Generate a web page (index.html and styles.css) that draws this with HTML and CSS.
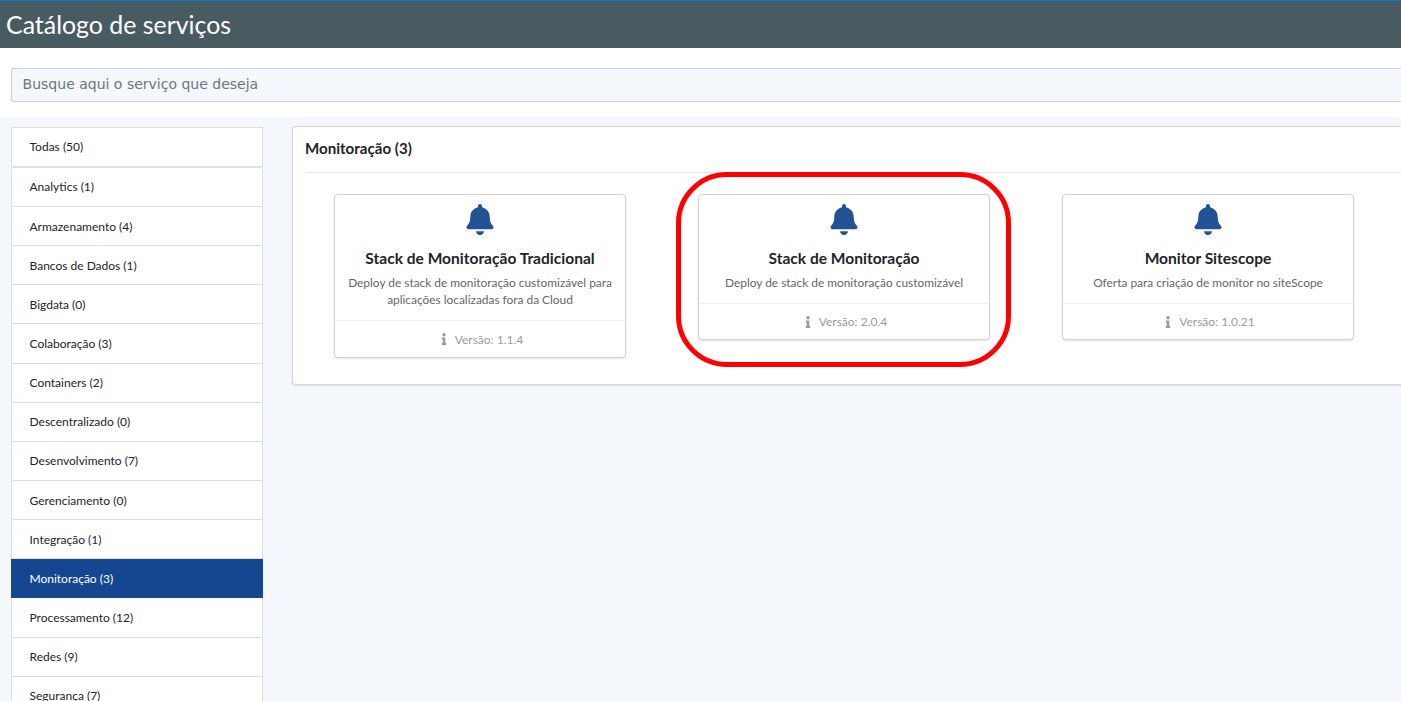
FILE: index.html
```html
<!DOCTYPE html>
<html lang="pt-BR">
<head>
<meta charset="utf-8">
<title>Catálogo de serviços</title>
<link rel="stylesheet" href="styles.css">
</head>
<body>
<svg width="0" height="0" class="sprite" aria-hidden="true">
  <symbol id="bell" viewBox="0 0 448 512"><path d="M224 512c35.32 0 63.97-28.65 63.97-64H160.03c0 35.35 28.65 64 63.97 64zm215.39-149.71c-19.32-20.76-55.47-51.99-55.47-154.29 0-77.7-54.48-139.9-127.94-155.16V32c0-17.67-14.32-32-31.98-32s-31.98 14.33-31.98 32v20.84C118.56 68.1 64.08 130.3 64.08 208c0 102.3-36.15 133.53-55.47 154.29-6 6.45-8.66 14.16-8.61 21.71.11 16.4 12.98 32 32.1 32h383.8c19.12 0 32-15.6 32.1-32 .05-7.55-2.61-15.27-8.61-21.71z"/></symbol>
  <symbol id="info" viewBox="0 0 192 512"><path d="M20 424.229h20V279.771H20c-11.046 0-20-8.954-20-20V212c0-11.046 8.954-20 20-20h112c11.046 0 20 8.954 20 20v212.229h20c11.046 0 20 8.954 20 20V492c0 11.046-8.954 20-20 20H20c-11.046 0-20-8.954-20-20v-47.771c0-11.046 8.954-20 20-20zM96 0C56.235 0 24 32.235 24 72s32.235 72 72 72 72-32.235 72-72S135.764 0 96 0z"/></symbol>
</svg>
<header class="topbar"><h1>Catálogo de serviços</h1></header>
<div class="search"><input type="text" placeholder="Busque aqui o serviço que deseja"></div>
<div class="content">
  <nav class="sidebar">
    <a class="all">Todas (50)</a>
    <div class="group">
      <a>Analytics (1)</a>
      <a>Armazenamento (4)</a>
      <a>Bancos de Dados (1)</a>
      <a>Bigdata (0)</a>
      <a>Colaboração (3)</a>
      <a>Containers (2)</a>
      <a>Descentralizado (0)</a>
      <a>Desenvolvimento (7)</a>
      <a>Gerenciamento (0)</a>
      <a>Integração (1)</a>
      <a class="active">Monitoração (3)</a>
      <a>Processamento (12)</a>
      <a>Redes (9)</a>
      <a>Segurança (7)</a>
    </div>
  </nav>
  <main class="panel">
    <h2>Monitoração (3)</h2>
    <div class="cards">
      <article class="card">
        <div class="body">
          <svg class="bell"><use href="#bell"/></svg>
          <h3>Stack de Monitoração Tradicional</h3>
          <p>Deploy de stack de monitoração customizável para aplicações localizadas fora da Cloud</p>
        </div>
        <footer><svg class="info"><use href="#info"/></svg><span>Versão: 1.1.4</span></footer>
      </article>
      <article class="card highlighted">
        <div class="body">
          <svg class="bell"><use href="#bell"/></svg>
          <h3>Stack de Monitoração</h3>
          <p>Deploy de stack de monitoração customizável</p>
        </div>
        <footer><svg class="info"><use href="#info"/></svg><span>Versão: 2.0.4</span></footer>
      </article>
      <article class="card">
        <div class="body">
          <svg class="bell"><use href="#bell"/></svg>
          <h3>Monitor Sitescope</h3>
          <p>Oferta para criação de monitor no siteScope</p>
        </div>
        <footer><svg class="info"><use href="#info"/></svg><span>Versão: 1.0.21</span></footer>
      </article>
    </div>
  </main>
</div>
</body>
</html>
```
FILE: styles.css
```css
* { box-sizing: border-box; }
body {
  margin: 0;
  height: 701px;
  overflow: hidden;
  background: #f4f7fc;
  color: #212529;
  font-family: Lato, sans-serif;
  font-size: 12px;
}
h1, h2, h3, p { margin: 0; }
.sprite { display: none; }

.topbar {
  height: 48px;
  padding: 0 6px;
  border-top: 1px solid #0878c9;
  background: #485b61;
  color: #fff;
}
.topbar h1 { font-size: 24.9px; font-weight: 400; line-height: 46px; }

.search { height: 69px; padding: 20px 0 0 11px; background: #fff; }
.search input {
  display: block;
  width: 100%;
  height: 34px;
  padding: 0 10.6px 2px;
  border: 1px solid #ced4da;
  border-right: 0;
  border-radius: 3px 0 0 3px;
  background: #f4f7fc;
  font: 14px "DejaVu Sans", sans-serif;
}
.search input::placeholder { color: #6c757d; opacity: 1; }

.content { display: flex; align-items: flex-start; gap: 29px; padding: 9px 0 0 11px; }

.sidebar { flex: none; width: 252px; padding-top: 1px; }
.sidebar a {
  display: block;
  height: 39.15px;
  padding: .5px 0 0 17.5px;
  border: 1px solid #dfdfdf;
  border-top: 0;
  background: #fff;
  line-height: 38px;
}
.sidebar .all { height: 39.9px; padding-top: 0; border-top: 1px solid #dfdfdf; }
.sidebar .group a:first-child {
  height: 40.15px;
  padding-top: 0;
  border-top: 1px solid #dfdfdf;
  border-radius: 3px 3px 0 0;
}
.sidebar .active { background: #154690; border-color: #154690; color: #fff; }

.panel {
  flex: 1;
  min-width: 0;
  height: 259px;
  padding-left: 12px;
  border: 1px solid #d3d5d7;
  border-right: 0;
  border-radius: 4px 0 0 4px;
  background: #fff;
  box-shadow: 0 1px 2px rgba(0, 0, 0, .1);
}
.panel h2 {
  height: 46px;
  border-bottom: 1px solid #e2e2e2;
  font-size: 15.1px;
  font-weight: 700;
  line-height: 42px;
}
.cards { display: flex; align-items: flex-start; gap: 72px; padding: 21px 0 0 29px; }

.card {
  position: relative;
  flex: none;
  width: 292px;
  border: 1px solid #d0d2d4;
  border-radius: 4px;
  background: #fff;
  text-align: center;
  box-shadow: 0 1px 2px rgba(0, 0, 0, .12);
}
.card .body { padding: 9px 12px 11.4px; }
.card .bell { display: block; width: 28px; height: 31px; margin: 0 auto; fill: #225196; }
.card h3 { margin-top: 13px; font-size: 15.55px; font-weight: 700; line-height: 20px; }
.card p { margin-top: 6px; color: #666; font-size: 11.9px; line-height: 17.4px; }
.card footer {
  display: flex;
  align-items: center;
  justify-content: center;
  gap: 8px;
  height: 36.5px;
  padding: .6px 0 0 4px;
  border-top: 1px solid #eee;
  color: #9b9b9b;
}
.card .info { width: 6px; height: 12px; fill: #9b9b9b; }

/* Callout around the selected service */
.highlighted::after {
  content: "";
  position: absolute;
  inset: -23.5px -22px -28px -23.5px;
  border: 5px solid #f00;
  border-radius: 51px;
}
```
